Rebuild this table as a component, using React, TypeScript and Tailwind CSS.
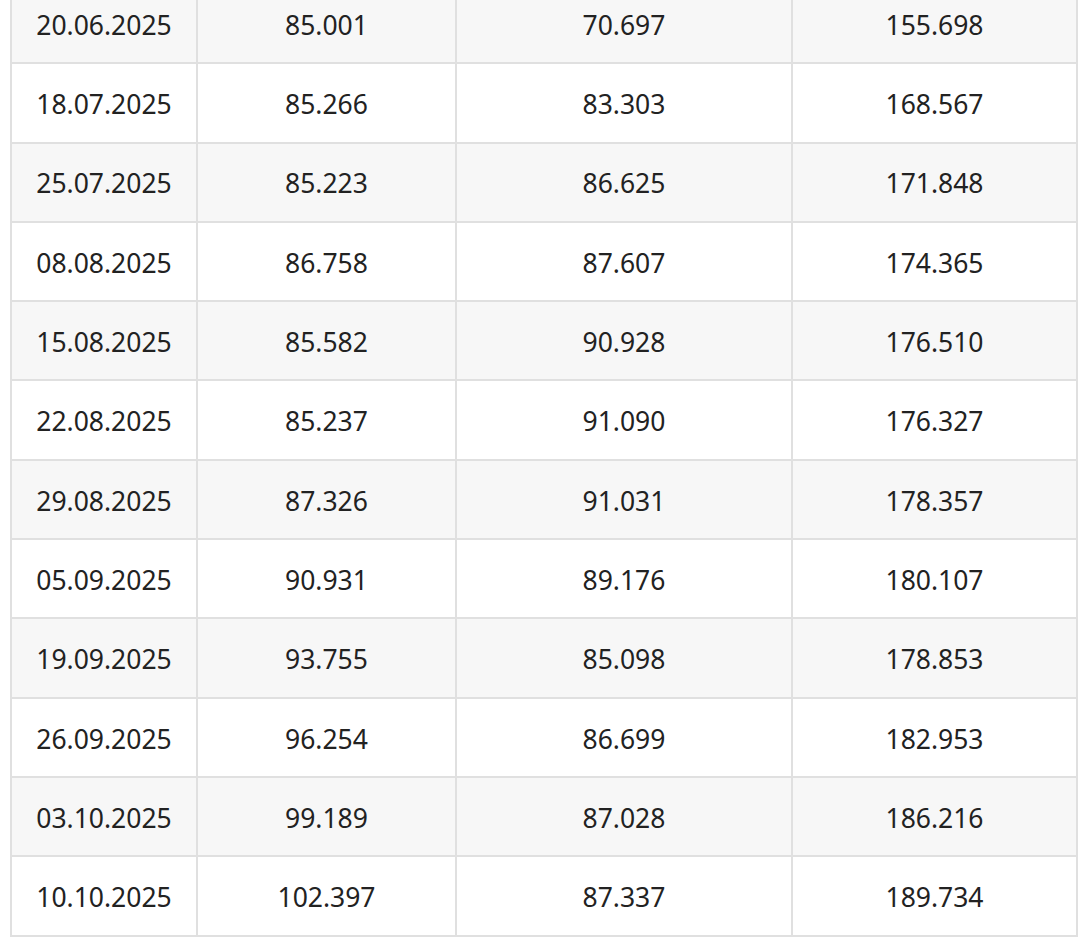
const rows: string[][] = [
  ['20.06.2025', '85.001', '70.697', '155.698'],
  ['18.07.2025', '85.266', '83.303', '168.567'],
  ['25.07.2025', '85.223', '86.625', '171.848'],
  ['08.08.2025', '86.758', '87.607', '174.365'],
  ['15.08.2025', '85.582', '90.928', '176.510'],
  ['22.08.2025', '85.237', '91.090', '176.327'],
  ['29.08.2025', '87.326', '91.031', '178.357'],
  ['05.09.2025', '90.931', '89.176', '180.107'],
  ['19.09.2025', '93.755', '85.098', '178.853'],
  ['26.09.2025', '96.254', '86.699', '182.953'],
  ['03.10.2025', '99.189', '87.028', '186.216'],
  ['10.10.2025', '102.397', '87.337', '189.734'],
];

const App = () => {
  return (
    <div className="w-[1080px] h-[942px] overflow-hidden bg-white">
      <div className="pl-[10px] -mt-[17px]">
        <table
          className="table-fixed border-collapse w-[1068px] text-[26.5px] text-[#222222]"
          style={{ fontFamily: '"Noto Sans", "Open Sans", sans-serif' }}
        >
          <colgroup>
            <col className="w-[186px]" />
            <col className="w-[259px]" />
            <col className="w-[336px]" />
            <col className="w-[285px]" />
          </colgroup>
          <tbody>
            {rows.map((row, i) => (
              <tr key={row[0]} className={i % 2 === 0 ? 'bg-[#f7f7f7] h-[79.3px]' : 'bg-white h-[79.3px]'}>
                {row.map((cell, j) => (
                  <td key={j} className="border-2 border-[#e0e0e0] text-center align-middle p-0 pt-[3px] leading-none">
                    {cell}
                  </td>
                ))}
              </tr>
            ))}
          </tbody>
        </table>
      </div>
    </div>
  );
};

export default App;
